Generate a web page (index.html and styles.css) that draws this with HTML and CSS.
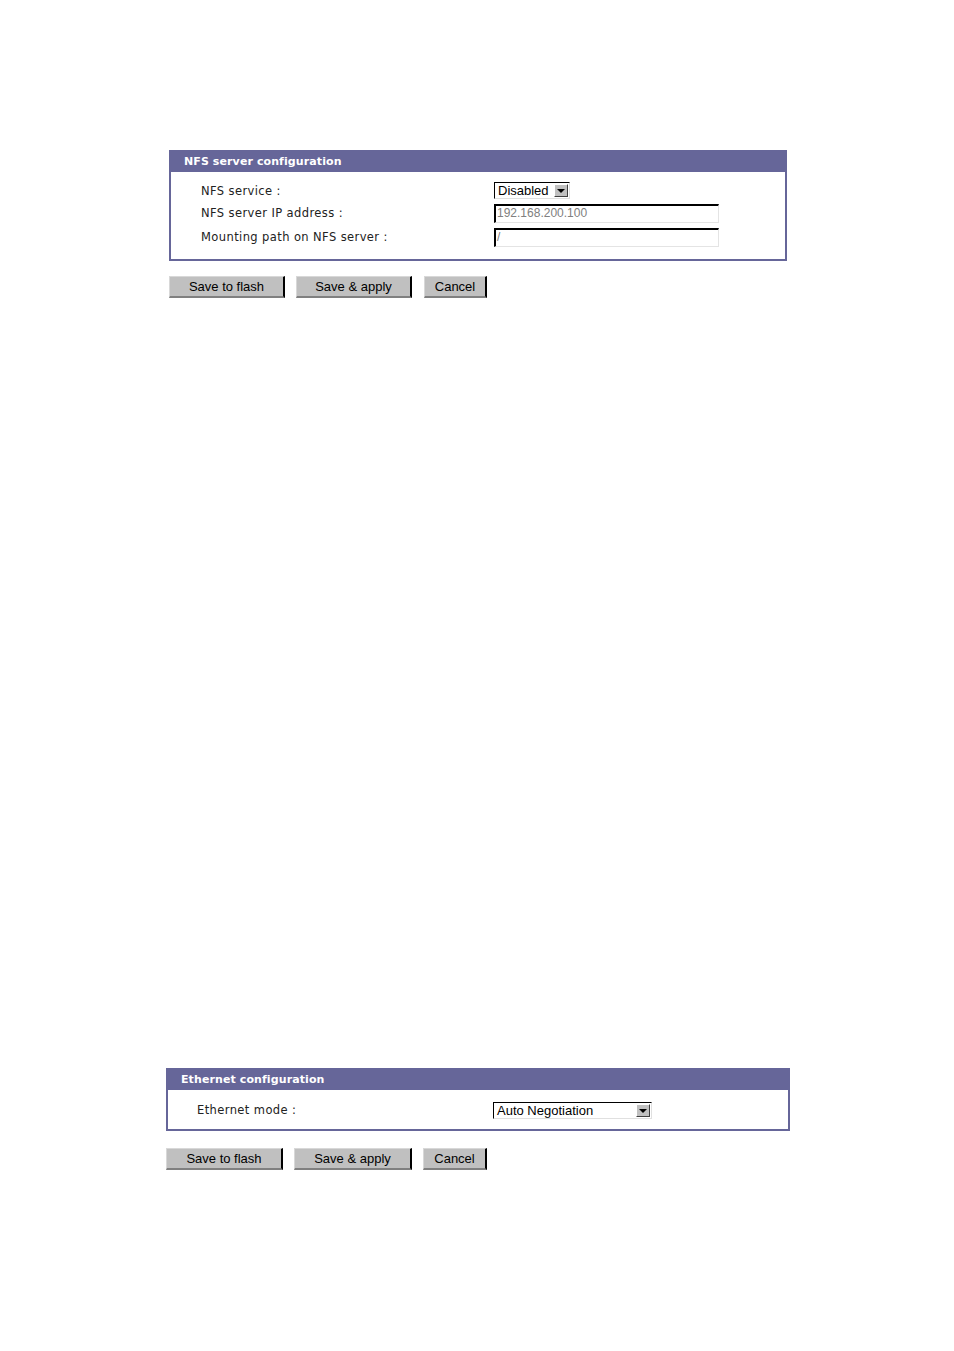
FILE: index.html
```html
<!DOCTYPE html>
<html>
<head>
<meta charset="utf-8">
<link rel="stylesheet" href="styles.css">
</head>
<body>
<div class="page">
  <section class="panel panel-nfs">
    <div class="panel-head">NFS server configuration</div>
    <div class="panel-body">
      <div class="row">
        <div class="label">NFS service :</div>
        <div class="field"><div class="select sel-small"><span class="sel-text">Disabled</span><span class="sel-btn"><span class="tri"></span></span></div></div>
      </div>
      <div class="row">
        <div class="label">NFS server IP address :</div>
        <div class="field"><div class="input">192.168.200.100</div></div>
      </div>
      <div class="row">
        <div class="label">Mounting path on NFS server :</div>
        <div class="field"><div class="input">/</div></div>
      </div>
    </div>
  </section>
  <div class="buttons buttons-nfs">
    <button class="btn btn-flash">Save to flash</button>
    <button class="btn btn-apply">Save &amp; apply</button>
    <button class="btn btn-cancel">Cancel</button>
  </div>

  <section class="panel panel-eth">
    <div class="panel-head">Ethernet configuration</div>
    <div class="panel-body">
      <div class="row">
        <div class="label">Ethernet mode :</div>
        <div class="field"><div class="select sel-wide"><span class="sel-text">Auto Negotiation</span><span class="sel-btn"><span class="tri"></span></span></div></div>
      </div>
    </div>
  </section>
  <div class="buttons buttons-eth">
    <button class="btn btn-flash">Save to flash</button>
    <button class="btn btn-apply">Save &amp; apply</button>
    <button class="btn btn-cancel">Cancel</button>
  </div>
</div>
</body>
</html>
```

FILE: styles.css
```css
html, body {
  margin: 0;
  padding: 0;
  background: #ffffff;
}
.page {
  width: 954px;
  height: 1351px;
  padding-top: 150px;
  box-sizing: border-box;
  font-family: "DejaVu Sans", Verdana, sans-serif;
  color: #000;
}
.panel {
  border: 2px solid #666699;
  border-top: 0;
  box-sizing: border-box;
  background: #fff;
}
.panel-nfs {
  margin-left: 169px;
  width: 618px;
  height: 111px;
}
.panel-eth {
  margin-left: 166px;
  width: 624px;
  height: 63px;
  margin-top: 770px;
}
.panel-head {
  background: #666699;
  color: #fff;
  font-weight: bold;
  font-size: 11px;
  height: 22px;
  line-height: 24px;
  margin: 0 -2px;
  letter-spacing: 0.1px;
  padding-left: 15px;
  box-sizing: border-box;
}
.panel-nfs .panel-body { padding-top: 8px; }
.panel-eth .panel-body { padding-top: 9px; }
.row {
  display: flex;
  align-items: center;
  height: 24px;
}
.panel-nfs .row:first-child { height: 21px; }
.panel-eth .row { height: 22px; }
.panel-nfs .row { padding-left: 30px; }
.panel-eth .row { padding-left: 29px; }
.label {
  font-size: 11.5px;
  letter-spacing: 0.4px;
  color: #222;
}
.panel-nfs .label { width: 293px; }
.panel-eth .label { width: 296px; }
.field { display: flex; }

.select {
  display: flex;
  align-items: center;
  height: 17px;
  box-sizing: border-box;
  border: 1px solid #000;
  border-right-color: #e0e0e0;
  border-bottom-color: #e0e0e0;
  background: #fff;
  font-family: "Liberation Sans", Arial, sans-serif;
  font-size: 13px;
  padding-left: 3px;
  padding-right: 1px;
}
.sel-small { width: 76px; }
.sel-wide { width: 159px; }
.sel-text { flex: 1; line-height: 15px; }
.sel-btn {
  width: 14px;
  height: 13px;
  background: #c0c0c0;
  border-top: 1px solid #fff;
  border-left: 1px solid #fff;
  border-right: 1px solid #404040;
  border-bottom: 1px solid #404040;
  box-sizing: border-box;
  display: flex;
  align-items: center;
  justify-content: center;
}
.tri {
  width: 0;
  height: 0;
  border-left: 4px solid transparent;
  border-right: 4px solid transparent;
  border-top: 4px solid #000;
  margin-top: 1px;
}
.input {
  width: 225px;
  height: 19px;
  box-sizing: border-box;
  border-top: 2px solid #000;
  border-left: 2px solid #000;
  border-right: 1px solid #e4e4e4;
  border-bottom: 1px solid #e4e4e4;
  font-family: "Liberation Sans", Arial, sans-serif;
  font-size: 12px;
  color: #808080;
  line-height: 15px;
  padding-left: 1px;
}
.buttons {
  display: flex;
}
.buttons-nfs { margin-left: 169px; margin-top: 15px; }
.buttons-eth { margin-left: 166px; margin-top: 17px; }
.btn {
  height: 22px;
  box-sizing: border-box;
  background: #c0c0c0;
  border: 0;
  border-top: 1px solid #d8d8d8;
  border-left: 1px solid #d8d8d8;
  border-right: 2px solid #000;
  border-bottom: 2px solid #808080;
  font-family: "Liberation Sans", Arial, sans-serif;
  font-size: 13px;
  color: #000;
  padding: 0;
  margin: 0;
}
.buttons-nfs .btn-flash { width: 116px; margin-right: 11px; }
.buttons-nfs .btn-apply { width: 116px; margin-right: 12px; }
.buttons-nfs .btn-cancel { width: 63px; }
.buttons-eth .btn-flash { width: 117px; margin-right: 11px; }
.buttons-eth .btn-apply { width: 118px; margin-right: 11px; }
.buttons-eth .btn-cancel { width: 64px; }
```
